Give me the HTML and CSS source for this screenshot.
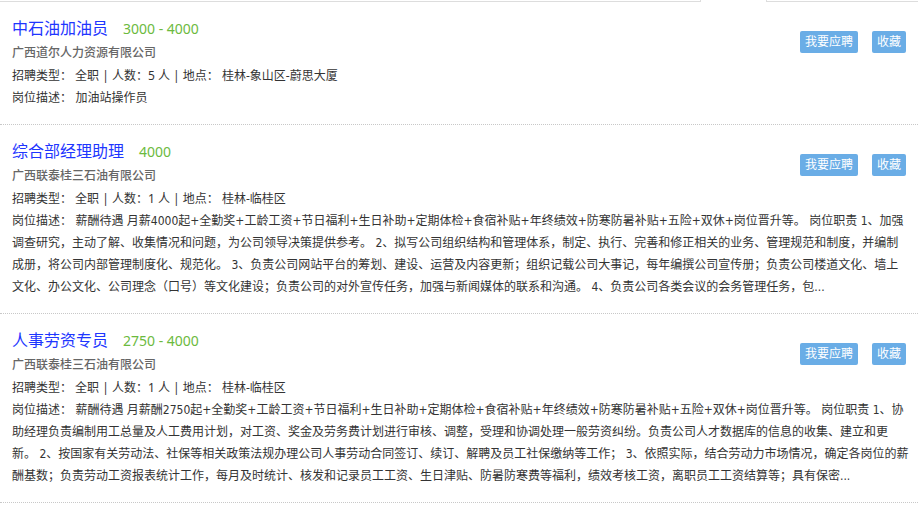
FILE: index.html
```html
<!DOCTYPE html>
<html lang="zh-CN">
<head>
    <meta charset="UTF-8">
    <meta name="viewport" content="width=device-width, initial-scale=1.0">
    <title>职位列表</title>
    <link rel="stylesheet" href="styles.css">
</head>
<body>
    <div class="tabs">
        <div class="tab-line first"></div>
        <div class="tab active"></div>
        <div class="tab-line"></div>
    </div>

    <ul class="job-list">
        <li class="job">
            <div class="job-actions">
                <a href="#" class="btn">我要应聘</a>
                <a href="#" class="btn">收藏</a>
            </div>
            <div class="job-title">
                <a href="#" class="name">中石油加油员</a>
                <span class="salary">3000 - 4000</span>
            </div>
            <div class="company">广西道尔人力资源有限公司</div>
            <div class="info">招聘类型： 全职 | 人数：5 人 | 地点： 桂林-象山区-蔚思大厦</div>
            <div class="desc">岗位描述： 加油站操作员</div>
        </li>
        <li class="job">
            <div class="job-actions">
                <a href="#" class="btn">我要应聘</a>
                <a href="#" class="btn">收藏</a>
            </div>
            <div class="job-title">
                <a href="#" class="name">综合部经理助理</a>
                <span class="salary">4000</span>
            </div>
            <div class="company">广西联泰桂三石油有限公司</div>
            <div class="info">招聘类型： 全职 | 人数：1 人 | 地点： 桂林-临桂区</div>
            <div class="desc">岗位描述： 薪酬待遇 月薪4000起+全勤奖+工龄工资+节日福利+生日补助+定期体检+食宿补贴+年终绩效+防寒防暑补贴+五险+双休+岗位晋升等。 岗位职责 1、加强调查研究，主动了解、收集情况和问题，为公司领导决策提供参考。 2、拟写公司组织结构和管理体系，制定、执行、完善和修正相关的业务、管理规范和制度，并编制成册，将公司内部管理制度化、规范化。 3、负责公司网站平台的筹划、建设、运营及内容更新；组织记载公司大事记，每年编撰公司宣传册；负责公司楼道文化、墙上文化、办公文化、公司理念（口号）等文化建设；负责公司的对外宣传任务，加强与新闻媒体的联系和沟通。 4、负责公司各类会议的会务管理任务，包...</div>
        </li>
        <li class="job">
            <div class="job-actions">
                <a href="#" class="btn">我要应聘</a>
                <a href="#" class="btn">收藏</a>
            </div>
            <div class="job-title">
                <a href="#" class="name">人事劳资专员</a>
                <span class="salary">2750 - 4000</span>
            </div>
            <div class="company">广西联泰桂三石油有限公司</div>
            <div class="info">招聘类型： 全职 | 人数：1 人 | 地点： 桂林-临桂区</div>
            <div class="desc">岗位描述： 薪酬待遇 月薪酬2750起+全勤奖+工龄工资+节日福利+生日补助+定期体检+食宿补贴+年终绩效+防寒防暑补贴+五险+双休+岗位晋升等。 岗位职责 1、协助经理负责编制用工总量及人工费用计划，对工资、奖金及劳务费计划进行审核、调整，受理和协调处理一般劳资纠纷。负责公司人才数据库的信息的收集、建立和更新。 2、按国家有关劳动法、社保等相关政策法规办理公司人事劳动合同签订、续订、解聘及员工社保缴纳等工作； 3、依照实际，结合劳动力市场情况，确定各岗位的薪酬基数；负责劳动工资报表统计工作，每月及时统计、核发和记录员工工资、生日津贴、防暑防寒费等福利，绩效考核工资，离职员工工资结算等；具有保密...</div>
        </li>
    </ul>
</body>
</html>
```

FILE: styles.css
```css
* {
    margin: 0;
    padding: 0;
    box-sizing: border-box;
}

body {
    font-family: "Noto Sans", "Noto Sans CJK SC", sans-serif;
    font-size: 12px;
    color: #333;
    background: #fff;
}

a {
    text-decoration: none;
}

/* tab strip, only its bottom edge is visible */
.tabs {
    display: flex;
    height: 2px;
}

.tab-line {
    flex: 1;
    border-bottom: 1px solid #ddd;
}

.tab-line.first {
    flex: 0 0 700px;
}

.tab.active {
    width: 67px;
    border-left: 1px solid #ddd;
    border-right: 1px solid #ddd;
}

.job-list {
    list-style: none;
}

.job {
    padding: 14px 8px 15px 12px;
    border-bottom: 1px dotted #c8c8c8;
}

.job-actions {
    float: right;
    display: flex;
    gap: 14px;
    margin-top: 15px;
    margin-right: 4px;
}

.btn {
    display: block;
    height: 22px;
    line-height: 22px;
    padding: 0 5px;
    background: #6aade6;
    color: #fff;
    font-size: 12px;
    border-radius: 2px;
}

.job-title {
    display: flex;
    align-items: baseline;
    gap: 15px;
    line-height: 24px;
}

.job-title .name {
    font-size: 16px;
    color: #1e36ff;
}

.job-title .salary {
    font-size: 14px;
    color: #6cba3e;
}

.company {
    line-height: 23px;
    color: #666;
    font-weight: 500;
}

.info {
    line-height: 23px;
}

.desc {
    font-family: "DejaVu Sans Condensed", "DejaVu Sans", "Noto Sans CJK SC", sans-serif;
    font-stretch: condensed;
    line-height: 22px;
}
```
